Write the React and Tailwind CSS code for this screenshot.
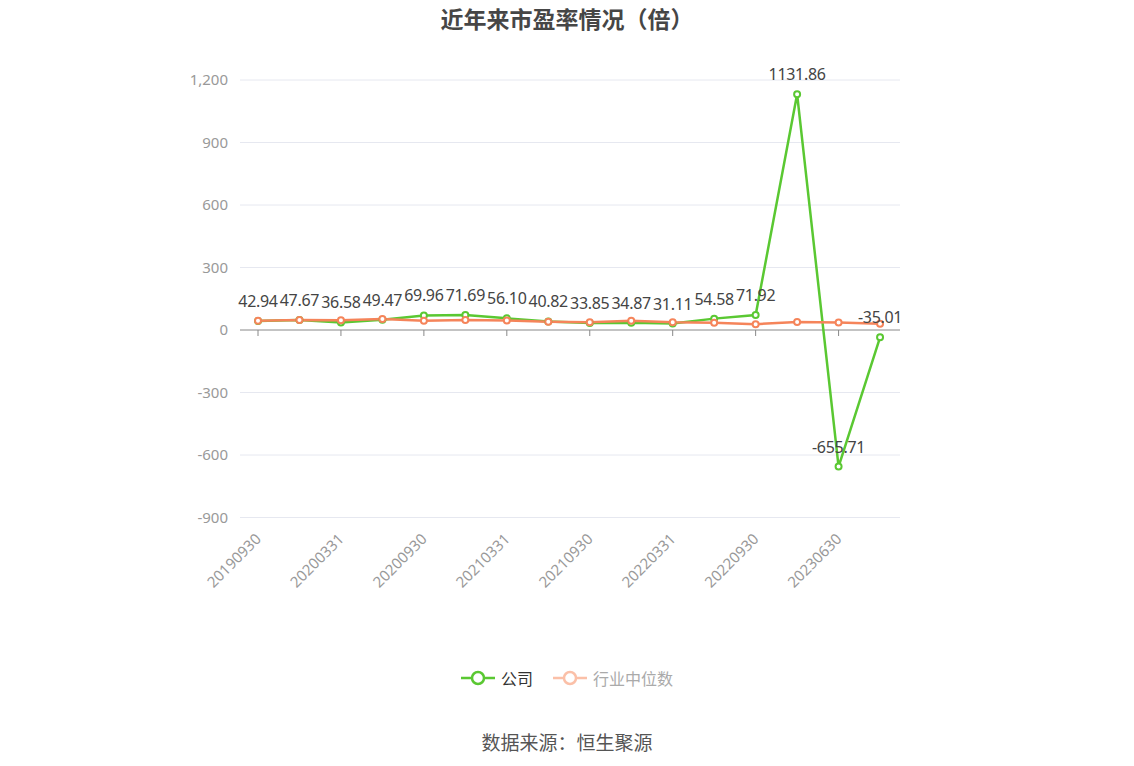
import React from "react";

const co = [42.94, 47.67, 36.58, 49.47, 69.96, 71.69, 56.1, 40.82, 33.85, 34.87, 31.11, 54.58, 71.92, 1131.86, -655.71, -35.01];
const ind = [44, 48, 47, 53, 45, 48, 46, 40, 37, 44, 37, 35, 28, 38, 36, 30];
const X = (i) => 258 + i * 41.47;
const Y = (v) => 330 - v * (250 / 1200);
const yTicks = [1200, 900, 600, 300, 0, -300, -600, -900];
const xl = ["20190930", "20200331", "20200930", "20210331", "20210930", "20220331", "20220930", "20230630"];

export default function App() {
  const pts = (a) => a.map((v, i) => `${X(i)},${Y(v)}`).join(" ");
  return (
    <div className="w-[1134px] h-[766px] bg-white flex flex-col items-center" style={{ fontFamily: '"Noto Sans CJK SC", "Noto Sans", sans-serif' }}>
      <div className="mt-[2px] text-[23px] font-bold text-[#464646] leading-[32px]">近年来市盈率情况（倍）</div>
      <svg width="1134" height="620" viewBox="0 34 1134 620" className="block" style={{ fontFamily: '"Noto Sans", sans-serif' }}>
        {yTicks.map((t) => (
          <g key={t}>
            <line x1="240" x2="900" y1={Y(t)} y2={Y(t)} stroke={t === 0 ? "#888" : "#e6e8f0"} strokeWidth="1" />
            <text x="228" y={Y(t) + 5} textAnchor="end" fontSize="15" fill="#999">{t.toLocaleString("en-US")}</text>
          </g>
        ))}
        {xl.map((l, k) => (
          <g key={l}>
            <line x1={X(k * 2)} x2={X(k * 2)} y1="330" y2="336" stroke="#888" />
            <text x={X(k * 2) + 4} y="540" textAnchor="end" fontSize="15" fill="#999" transform={`rotate(-45 ${X(k * 2) + 4} 540)`}>{l}</text>
          </g>
        ))}
        <polyline points={pts(co)} fill="none" stroke="#5ac832" strokeWidth="2.5" />
        <polyline points={pts(ind)} fill="none" stroke="#f5845a" strokeWidth="2.5" />
        {co.map((v, i) => (
          <circle key={"c" + i} cx={X(i)} cy={Y(v)} r="3" fill="#fff" stroke="#5ac832" strokeWidth="2" />
        ))}
        {ind.map((v, i) => (
          <circle key={"d" + i} cx={X(i)} cy={Y(v)} r="3" fill="#fff" stroke="#f5845a" strokeWidth="2" />
        ))}
        {co.map((v, i) => (
          <text key={"t" + i} x={X(i)} y={Y(v) - 14} textAnchor="middle" fontSize="16" fill="#444" letterSpacing="-0.3">{v.toFixed(2)}</text>
        ))}
      </svg>
      <div className="mt-[12px] flex items-center gap-[10px] text-[16px]">
        <div className="flex items-center gap-[6px] text-[#333]">
          <svg width="34" height="16"><line x1="0" x2="34" y1="8" y2="8" stroke="#5ac832" strokeWidth="2.5" /><circle cx="17" cy="8" r="6" fill="#fff" stroke="#5ac832" strokeWidth="2.5" /></svg>
          公司
        </div>
        <div className="flex items-center gap-[6px] text-[#aaa] ml-[10px]">
          <svg width="34" height="16"><line x1="0" x2="34" y1="8" y2="8" stroke="#fbc0a8" strokeWidth="2.5" /><circle cx="17" cy="8" r="6" fill="#fff" stroke="#fbc0a8" strokeWidth="2.5" /></svg>
          行业中位数
        </div>
      </div>
      <div className="mt-[38px] text-[19px] text-[#555]">数据来源：恒生聚源</div>
    </div>
  );
}
